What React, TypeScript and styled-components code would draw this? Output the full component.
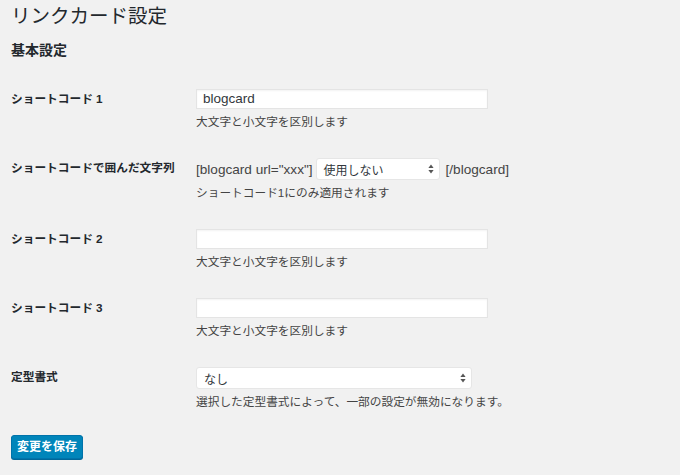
import React, { ReactElement } from 'react';
import styled, { createGlobalStyle } from 'styled-components';

const GlobalStyle = createGlobalStyle`
  html, body {
    margin: 0;
    padding: 0;
    background: #f1f1f1;
  }
  body {
    font-family: 'Liberation Sans', 'Noto Sans CJK JP', sans-serif;
    color: #23282d;
  }
`;

type Setting = {
  label: string;
  kind: 'text' | 'wrap' | 'select';
  value?: string;
  width?: number;
  description: string;
};

const settings: Setting[] = [
  { label: 'ショートコード 1', kind: 'text', value: 'blogcard', description: '大文字と小文字を区別します' },
  { label: 'ショートコードで囲んだ文字列', kind: 'wrap', value: '使用しない', width: 124, description: 'ショートコード1にのみ適用されます' },
  { label: 'ショートコード 2', kind: 'text', value: '', description: '大文字と小文字を区別します' },
  { label: 'ショートコード 3', kind: 'text', value: '', description: '大文字と小文字を区別します' },
  { label: '定型書式', kind: 'select', value: 'なし', width: 276, description: '選択した定型書式によって、一部の設定が無効になります。' },
];

function SortArrows(): ReactElement {
  return (
    <svg width="6" height="10" viewBox="0 0 6 10">
      <path d="M3 0.5 L5.6 4 H0.4 Z" fill="#555" />
      <path d="M3 9.5 L5.6 6 H0.4 Z" fill="#555" />
    </svg>
  );
}

function Select({ value, width }: { value?: string; width?: number }): ReactElement {
  return (
    <SelectBox $width={width ?? 124}>
      <span>{value}</span>
      <SortArrows />
    </SelectBox>
  );
}

function App(): ReactElement {
  return (
    <>
      <GlobalStyle />
      <Page>
        <Title>リンクカード設定</Title>
        <SectionTitle>基本設定</SectionTitle>
        <FormTable>
          {settings.map((s) => (
            <Row key={s.label}>
              <Label>{s.label}</Label>
              <Field>
                {s.kind === 'text' && <TextInput>{s.value}</TextInput>}
                {s.kind === 'wrap' && (
                  <InlineGroup>
                    <Code>[blogcard url="xxx"]</Code>
                    <Select value={s.value} width={s.width} />
                    <Code>[/blogcard]</Code>
                  </InlineGroup>
                )}
                {s.kind === 'select' && <Select value={s.value} width={s.width} />}
                <Description>{s.description}</Description>
              </Field>
            </Row>
          ))}
        </FormTable>
        <SaveButton type="button">変更を保存</SaveButton>
      </Page>
    </>
  );
}

const Page = styled.div`
  padding: 4px 0 0 11px;
  width: 680px;
  height: 475px;
  box-sizing: border-box;
`;

const Title = styled.h1`
  margin: 0;
  font-size: 19.5px;
  line-height: 24px;
  font-weight: 400;
  color: #23282d;
`;

const SectionTitle = styled.h2`
  margin: 12px 0 0;
  font-size: 14px;
  line-height: 20px;
  font-weight: 700;
  color: #23282d;
`;

const FormTable = styled.div`
  display: flex;
  flex-direction: column;
  gap: 27px;
  margin-top: 29px;
`;

const Row = styled.div`
  display: grid;
  grid-template-columns: 185px 1fr;
  align-items: start;
`;

const Label = styled.div`
  font-size: 11.7px;
  line-height: 20px;
  font-weight: 700;
  color: #23282d;
`;

const Field = styled.div`
  display: flex;
  flex-direction: column;
  align-items: flex-start;
`;

const TextInput = styled.div`
  width: 292px;
  height: 20px;
  box-sizing: border-box;
  padding: 0 6px;
  background: #fff;
  border: 1px solid #e4e4e4;
  box-shadow: inset 0 1px 2px rgba(0, 0, 0, 0.05);
  font-size: 13.5px;
  line-height: 18px;
  color: #32373c;
`;

const InlineGroup = styled.div`
  display: flex;
  align-items: center;
  gap: 3px;
`;

const Code = styled.span`
  font-size: 13.6px;
  color: #444;
  &:last-child {
    margin-left: 3px;
  }
`;

const SelectBox = styled.div<{ $width: number }>`
  width: ${({ $width }) => $width}px;
  height: 22px;
  box-sizing: border-box;
  display: flex;
  align-items: center;
  justify-content: space-between;
  padding: 0 5px 0 7px;
  background: #fff;
  border: 1px solid #e6e6e6;
  border-radius: 3px;
  font-size: 12px;
  color: #32373c;
`;

const Description = styled.p`
  margin: 4px 0 0;
  font-size: 11.7px;
  line-height: 18px;
  color: #444;
`;

const SaveButton = styled.button`
  margin-top: 24px;
  width: 72px;
  height: 24px;
  padding: 0;
  border: 1px solid #0073aa;
  border-radius: 3px;
  background: #0085ba;
  box-shadow: 0 1px 0 #006799;
  color: #fff;
  font-family: 'Liberation Sans', 'Noto Sans CJK JP', sans-serif;
  font-size: 12px;
  font-weight: 700;
  line-height: 22px;
  cursor: pointer;
`;

export default App;
